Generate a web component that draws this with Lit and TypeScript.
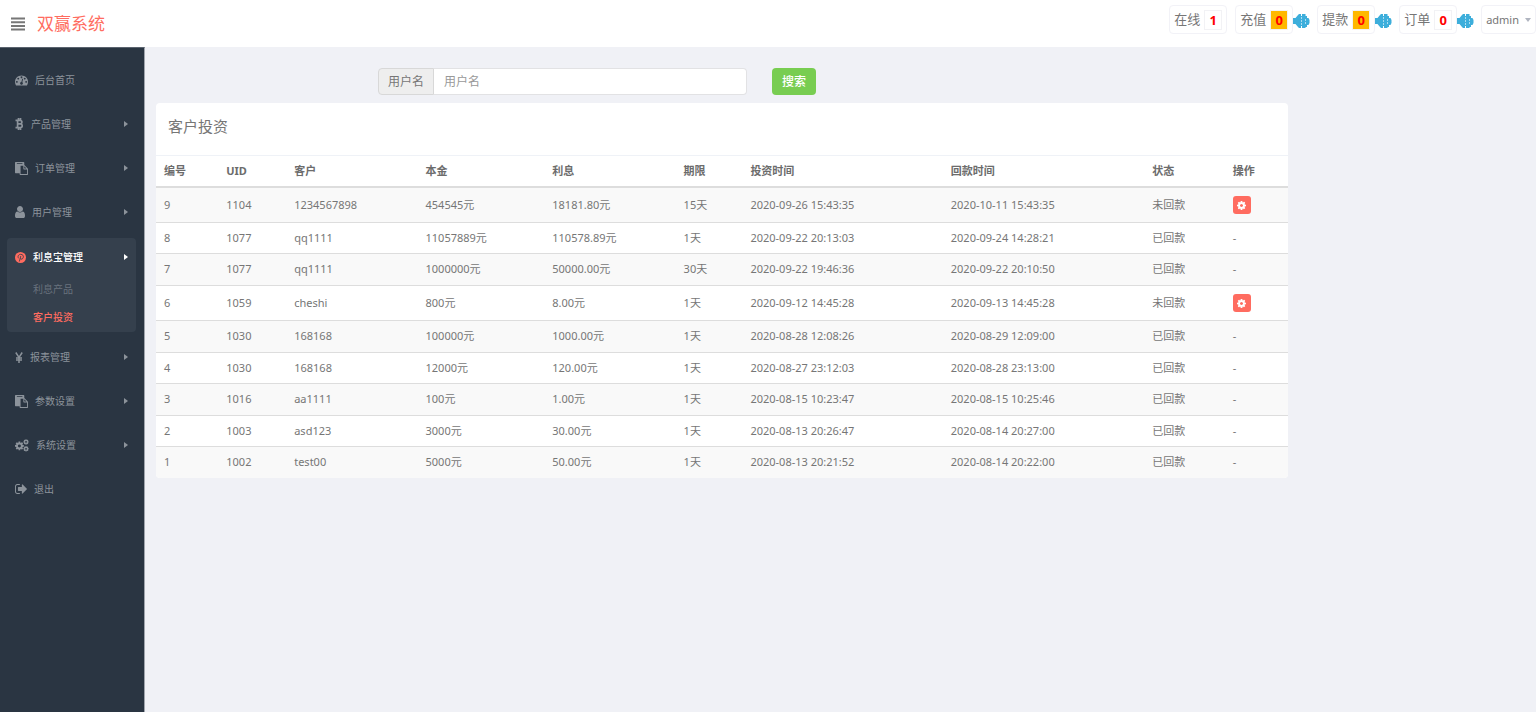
import { LitElement, html, css, svg } from "lit";
import { customElement } from "lit/decorators.js";

const COG = "M1152 896q0-106-75-181t-181-75-181 75-75 181 75 181 181 75 181-75 75-181zm512-109v222q0 12-8 23t-20 13l-185 28q-19 54-39 91 35 50 107 138 10 12 10 25t-9 23q-27 37-99 108t-94 71q-12 0-26-9l-138-108q-44 23-91 38-16 136-29 186-7 28-36 28h-222q-14 0-24.5-8.5t-11.5-21.5l-28-184q-49-16-90-37l-141 107q-10 9-25 9-14 0-25-11-126-114-165-168-7-10-7-23 0-12 8-23 15-21 51-66.5t54-70.5q-27-50-41-99l-183-27q-13-2-21-12.5t-8-23.5v-222q0-12 8-23t19-13l186-28q14-46 39-92-40-57-107-138-10-12-10-24 0-10 9-23 26-36 98.5-107.5t94.5-71.5q13 0 26 10l138 107q44-23 91-38 16-136 29-186 7-28 36-28h222q14 0 24.5 8.5t11.5 21.5l28 184q49 16 90 37l142-107q9-9 24-9 13 0 25 10 129 119 165 170 7 8 7 22 0 12-8 23-15 21-51 66.5t-54 70.5q26 50 41 98l183 28q13 2 21 12.5t8 23.5z";

const gear = html`<svg viewBox="128 128 1536 1536" width="9" height="9" fill="currentColor" fill-rule="evenodd" aria-hidden="true"><path d=${COG} /></svg>`;

const icon = (w: number, h: number, box: string, body: unknown) =>
  html`<svg class="ico" width=${w} height=${h} viewBox=${box} fill="currentColor" aria-hidden="true">${body}</svg>`;

const ICONS: Record<string, unknown> = {
  dash: icon(13, 11, "0 256 1792 1408", svg`<path d="M384 1152q0-53-37.5-90.5t-90.5-37.5-90.5 37.5-37.5 90.5 37.5 90.5 90.5 37.5 90.5-37.5 37.5-90.5zm192-448q0-53-37.5-90.5t-90.5-37.5-90.5 37.5-37.5 90.5 37.5 90.5 90.5 37.5 90.5-37.5 37.5-90.5zm428 481l101-382q6-26-7.5-48.5t-38.5-29.5-48 6.5-30 39.5l-101 382q-60 5-107 43.5t-63 98.5q-20 77 20 146t117 89 146-20 89-117q16-60-6-117t-72-91zm660-33q0-53-37.5-90.5t-90.5-37.5-90.5 37.5-37.5 90.5 37.5 90.5 90.5 37.5 90.5-37.5 37.5-90.5zm-640-640q0-53-37.5-90.5t-90.5-37.5-90.5 37.5-37.5 90.5 37.5 90.5 90.5 37.5 90.5-37.5 37.5-90.5zm448 192q0-53-37.5-90.5t-90.5-37.5-90.5 37.5-37.5 90.5 37.5 90.5 90.5 37.5 90.5-37.5 37.5-90.5zm320 448q0 261-141 483-19 29-54 29h-1402q-35 0-54-29-141-221-141-483 0-182 71-348t191-286 286-191 348-71 348 71 286 191 191 286 71 348z"/>`),
  coin: icon(9, 12, "0 0 9 12", svg`<path d="M.5 2.4h4.700a1.700 1.700 0 0 1 0 3.400H2.500M5.300 5.800a1.900 1.900 0 0 1 0 3.800H.5M2.600 2.400v7.200M3.500 0v2M5.500 0v2M3.500 9.800v2.200M5.500 9.800v2.200" fill="none" stroke="currentColor" stroke-width="1.700"/>`),
  paste: icon(13, 13, "0 0 1792 1792", svg`<path d="M768 1664h896v-640h-416q-40 0-68-28t-28-68v-416h-384v1152zm256-1440v-64q0-13-9.5-22.5t-22.5-9.5h-704q-13 0-22.5 9.5t-9.5 22.5v64q0 13 9.5 22.5t22.5 9.5h704q13 0 22.5-9.5t9.5-22.5zm256 672h299l-299-299v299zm512 128v672q0 40-28 68t-68 28h-960q-40 0-68-28t-28-68v-160h-544q-40 0-68-28t-28-68v-1344q0-40 28-68t68-28h1088q40 0 68 28t28 68v328q21 13 36 28l408 408q28 28 48 76t20 88z"/>`),
  user: icon(10, 12, "256 128 1280 1536", svg`<path d="M1536 1399q0 109-62.5 187t-150.5 78h-854q-88 0-150.5-78t-62.5-187q0-85 8.5-160.5t31.5-152 58.5-131 94-89 134.5-34.5q131 128 313 128t313-128q76 0 134.5 34.5t94 89 58.5 131 31.5 152 8.5 160.5zm-256-887q0 159-112.5 271.5t-271.5 112.5-271.5-112.5-112.5-271.5 112.5-271.5 271.5-112.5 271.5 112.5 112.5 271.5z"/>`),
  pin: icon(11, 11, "0 0 22 22", svg`<circle cx="11" cy="11" r="11"/><path d="M7.300 12.600C4.500 9 7 4.700 11.400 4.700c4 0 5.900 2.700 5.300 5.700-.7 3.900-4.600 5.100-6.200 2.800M11.600 8l-2.900 11" fill="none" stroke="#35404d" stroke-width="1.700"/>`),
  yen: icon(8, 11, "0 0 8 11", svg`<path d="M.8.500 4 5.400 7.200.5M4 5v6M1 5.900h6M1 8h6" fill="none" stroke="currentColor" stroke-width="1.500"/>`),
  cogs: icon(14, 13, "0 0 14 13", svg`<g fill-rule="evenodd"><path transform="translate(-.8 1.700) scale(.0058)" d=${COG}/><path transform="translate(7.800 -.3) scale(.0036)" d=${COG}/><path transform="translate(7.800 6.600) scale(.0036)" d=${COG}/></g>`),
  out: icon(12, 10, "64 256 1568 1280", svg`<path d="M704 1440q0 4 1 20t.5 26.5-3 23.5-10 19.5-20.5 6.500h-320q-119 0-203.5-84.5t-84.5-203.5v-704q0-119 84.5-203.5t203.5-84.5h320q13 0 22.5 9.5t9.5 22.5q0 4 1 20t.5 26.5-3 23.5-10 19.5-20.5 6.500h-320q-66 0-113 47t-47 113v704q0 66 47 113t113 47h312l11.5 1 11.5 3 8 5.500 7 9 2 13.500zm928-544q0 26-19 45l-544 544q-19 19-45 19t-45-19-19-45v-288h-448q-26 0-45-19t-19-45v-384q0-26 19-45t45-19h448v-288q0-26 19-45t45-19 45 19l544 544q19 19 19 45z"/>`),
};

const sound = html`<svg class="sound" width="17" height="14" viewBox="0 0 17 14" aria-hidden="true"><path fill="#3daedb" d="M0 4h2.500l2.500-3 1-1h2v2h1V0h3.500v2H14v2h1.500l1 2v3l-1 2H14v2h-1.500v1H9v-2H8v2H6l-1-1-2.500-3H0z"/><path d="M8.500 3v8M12.500 5v5" stroke="#a9dcf0" stroke-width="1" stroke-dasharray="2 1" fill="none"/></svg>`;

interface Item { icon: string; label: string; arrow?: boolean; children?: string[] }
const MENU: Item[] = [
  { icon: "dash", label: "后台首页" },
  { icon: "coin", label: "产品管理", arrow: true },
  { icon: "paste", label: "订单管理", arrow: true },
  { icon: "user", label: "用户管理", arrow: true },
  { icon: "pin", label: "利息宝管理", arrow: true, children: ["利息产品", "客户投资"] },
  { icon: "yen", label: "报表管理", arrow: true },
  { icon: "paste", label: "参数设置", arrow: true },
  { icon: "cogs", label: "系统设置", arrow: true },
  { icon: "out", label: "退出" },
];

const HEADS = ["编号", "UID", "客户", "本金", "利息", "期限", "投资时间", "回款时间", "状态", "操作"];
const PENDING = "未回款";
const ROWS = [
  ["9", "1104", "1234567898", "454545元", "18181.80元", "15天", "2020-09-26 15:43:35", "2020-10-11 15:43:35", "未回款"],
  ["8", "1077", "qq1111", "11057889元", "110578.89元", "1天", "2020-09-22 20:13:03", "2020-09-24 14:28:21", "已回款"],
  ["7", "1077", "qq1111", "1000000元", "50000.00元", "30天", "2020-09-22 19:46:36", "2020-09-22 20:10:50", "已回款"],
  ["6", "1059", "cheshi", "800元", "8.00元", "1天", "2020-09-12 14:45:28", "2020-09-13 14:45:28", "未回款"],
  ["5", "1030", "168168", "100000元", "1000.00元", "1天", "2020-08-28 12:08:26", "2020-08-29 12:09:00", "已回款"],
  ["4", "1030", "168168", "12000元", "120.00元", "1天", "2020-08-27 23:12:03", "2020-08-28 23:13:00", "已回款"],
  ["3", "1016", "aa1111", "100元", "1.00元", "1天", "2020-08-15 10:23:47", "2020-08-15 10:25:46", "已回款"],
  ["2", "1003", "asd123", "3000元", "30.00元", "1天", "2020-08-13 20:26:47", "2020-08-14 20:27:00", "已回款"],
  ["1", "1002", "test00", "5000元", "50.00元", "1天", "2020-08-13 20:21:52", "2020-08-14 20:22:00", "已回款"],
];

@customElement("app-root")
export class AppRoot extends LitElement {
  static styles = css`
    :host { display: flex; flex-direction: column; min-height: 100vh; background: #f0f1f6; color: #767676; font: 11px/16px "Noto Sans", "Noto Sans CJK SC", sans-serif; }
    * { box-sizing: border-box; }
    a { color: inherit; text-decoration: none; }
    button, input { font: inherit; color: inherit; margin: 0; }
    .top { display: flex; align-items: center; height: 47px; background: #fff; padding-left: 11px; }
    .burger { display: block; border: 0; background: none; padding: 0; }
    .burger svg { display: block; }
    .brand { margin-left: 12px; font-size: 17px; line-height: 24px; color: #ff6c60; }
    .stats { display: flex; margin-left: auto; align-self: flex-start; padding-top: 5px; }
    .stat { display: flex; align-items: center; height: 29px; border: 1px solid #f2f2f7; border-radius: 4px; background: #fff; padding: 0 4px; font-size: 13px; line-height: 19px; gap: 4px; }
    .count { border: 1px solid #f2f2f5; width: 18px; text-align: center; color: #f00; font-weight: 700; height: 20px; line-height: 18px; }
    .hot { background: #ffb800; }
    .first { margin-right: 8px; }
    .group { display: flex; align-items: center; margin-right: 7px; }
    .group .stat { width: 58px; }
    .sound { display: block; flex: none; margin-top: 2px; }
    .admin { display: flex; align-items: center; gap: 6px; height: 29px; border: 1px solid #f2f2f7; border-radius: 4px; background: #fff; padding: 0 4px; }
    .down { border: 3px solid transparent; border-top: 4px solid #b0b5c0; border-bottom: 0; }
    .body { display: flex; flex: 1; }
    .side { width: 145px; flex: none; background: #2a3542; border-right: 1px solid #a0a5ad; border-top: 1px solid #5a636e; padding: 14px 8px 0 7px; color: #8c939b; font-size: 10px; line-height: 16px; }
    .list { list-style: none; margin: 0; padding: 0; display: flex; flex-direction: column; gap: 8px; }
    .link { display: flex; align-items: center; height: 36px; padding: 0 8px; }
    .arrow { margin-left: auto; border: 3px solid transparent; border-left: 4px solid currentColor; border-right: 0; }
    .ico { display: block; flex: none; margin-right: 7px; }
    .open { background: #35404d; border-radius: 4px; margin-bottom: -1px; }
    .open .link { color: #fff; height: 38px; font-weight: 500; }
    .open .ico { color: #ff6c60; }
    .sub { list-style: none; margin: 0; padding: 0 0 0 26px; }
    .sub a { display: block; padding: 5px 0 7px; color: #69727d; }
    .sub a.current { color: #ff6c60; font-weight: 500; }
    .main { flex: 1; min-width: 0; padding: 21px 16px 20px 11px; }
    .content { width: 83%; }
    .search { display: flex; padding-left: 222px; height: 27px; margin-bottom: 8px; font-size: 12px; }
    .addon { display: flex; align-items: center; padding: 0 9px; background: #eee; border: 1px solid #d8d8d8; border-radius: 4px 0 0 4px; }
    .field { width: 313px; border: 1px solid #e2e2e4; border-left: 0; border-radius: 0 4px 4px 0; padding: 0 10px; background: #fff; outline: 0; }
    .field::placeholder { color: #999; opacity: 1; }
    .go { margin-left: 25px; width: 44px; border: 0; border-radius: 4px; background: #78cd51; color: #fff; padding: 0; font-weight: 500; }
    .panel { background: #fff; border-radius: 4px; overflow: hidden; }
    .title { margin: 0; height: 52px; padding: 11px 12px; font-size: 15px; line-height: 24px; font-weight: 400; }
    .grid { width: 100%; border-collapse: collapse; table-layout: fixed; }
    .grid th { text-align: left; font-weight: 700; padding: 7px 8px; border-top: 1px solid #eff2f7; border-bottom: 2px solid #ddd; color: #6c6c6c; }
    .grid td { padding: 7px 8px; border-top: 1px solid #ddd; white-space: nowrap; }
    .grid tbody tr:first-child td { border-top: 0; }
    .grid tbody tr:nth-child(odd) { background: #f9f9f9; }
    .grid tbody tr:nth-child(odd) td { padding-bottom: 8px; }
    .grid tbody tr.pending td { padding: 8px; }
    .edit { display: flex; align-items: center; justify-content: center; width: 18px; height: 18px; padding: 0; border: 0; border-radius: 3px; background: #ff6c60; color: #fff; }
    .w0 { width: 5.5%; } .w1 { width: 6%; } .w2 { width: 11.6%; } .w3 { width: 11.2%; } .w4 { width: 11.6%; }
    .w5 { width: 5.9%; } .w6 { width: 17.7%; } .w7 { width: 17.8%; } .w8 { width: 7.1%; } .w9 { width: 5.6%; }
  `;

  private stat(label: string, n: string, hot: boolean) {
    return html`<div class="group"><a class="stat" href="#">${label}<span class="count ${hot ? "hot" : ""}">${n}</span></a>${sound}</div>`;
  }

  render() {
    return html`
      <header class="top">
        <button class="burger" aria-label="menu"><svg width="14" height="14" viewBox="0 0 14 14" fill="#777"><path d="M0 .5h14v2H0zM0 4.200h14v2H0zM0 7.900h14v2H0zM0 11.500h14v2H0z"/></svg></button>
        <a class="brand" href="#">双赢系统</a>
        <div class="stats">
          <a class="stat first" href="#">在线<span class="count">1</span></a>
          ${this.stat("充值", "0", true)}
          ${this.stat("提款", "0", true)}
          ${this.stat("订单", "0", false)}
          <button class="admin">admin<span class="down"></span></button>
        </div>
      </header>
      <div class="body">
        <nav class="side">
          <ul class="list">
            ${MENU.map((m) => html`<li class=${m.children ? "open" : ""}>
              <a class="link" href="#">${ICONS[m.icon]}<span>${m.label}</span>${m.arrow ? html`<span class="arrow"></span>` : ""}</a>
              ${m.children ? html`<ul class="sub">${m.children.map((c, i) => html`<li><a href="#" class=${i === 1 ? "current" : ""}>${c}</a></li>`)}</ul>` : ""}
            </li>`)}
          </ul>
        </nav>
        <main class="main">
          <div class="content">
            <form class="search">
              <label class="addon" for="username">用户名</label>
              <input class="field" id="username" type="text" placeholder="用户名" />
              <button class="go" type="button">搜索</button>
            </form>
            <section class="panel">
              <h1 class="title">客户投资</h1>
              <table class="grid">
                <thead><tr>${HEADS.map((h, i) => html`<th class="w${i}">${h}</th>`)}</tr></thead>
                <tbody>
                  ${ROWS.map((r) => html`<tr class=${r[8] === PENDING ? "pending" : ""}>${r.map((c) => html`<td>${c}</td>`)}<td>${r[8] === PENDING ? html`<button class="edit" aria-label="操作">${gear}</button>` : "-"}</td></tr>`)}
                </tbody>
              </table>
            </section>
          </div>
        </main>
      </div>`;
  }
}
